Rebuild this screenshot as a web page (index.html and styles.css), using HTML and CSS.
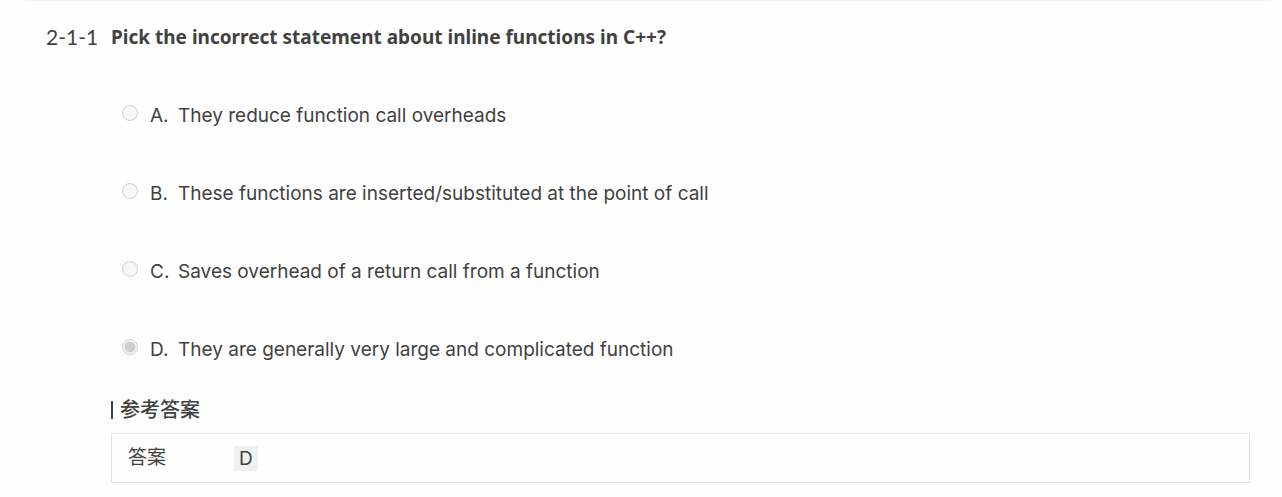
FILE: index.html
```html
<!DOCTYPE html>
<html lang="en">
<head>
<meta charset="utf-8">
<title>2-1-1</title>
<link rel="stylesheet" href="styles.css">
</head>
<body>
<main class="problem">
  <div class="number">2-1-1</div>
  <div class="content">
    <form>
      <fieldset class="question">
        <legend class="title">Pick the incorrect statement about inline functions in C++?</legend>
        <label class="option"><input class="radio" type="radio" name="answer" disabled><span class="letter">A.</span><span>They reduce function call overheads</span></label>
        <label class="option"><input class="radio" type="radio" name="answer" disabled><span class="letter">B.</span><span>These functions are inserted/substituted at the point of call</span></label>
        <label class="option"><input class="radio" type="radio" name="answer" disabled><span class="letter">C.</span><span>Saves overhead of a return call from a function</span></label>
        <label class="option"><input class="radio" type="radio" name="answer" disabled checked><span class="letter">D.</span><span>They are generally very large and complicated function</span></label>
      </fieldset>
    </form>
    <h2 class="heading" lang="zh-CN">参考答案</h2>
    <dl class="answer">
      <dt class="answer-label" lang="zh-CN">答案</dt>
      <dd class="answer-value">D</dd>
    </dl>
  </div>
</main>
</body>
</html>
```
FILE: styles.css
```css
* {
  box-sizing: border-box;
}

body {
  margin: 0;
  background: #fefefe;
  color: #414141;
  font: 19px/30px Inter, "Noto Sans CJK SC", sans-serif;
}

.problem {
  display: flex;
  gap: 10px;
  margin: 0 12px 0 25px;
  padding: 21px 20px 14px 21px;
  border-top: 1px solid #f7f7f7;
}

.number {
  flex: none;
  min-width: 55px;
  font-family: Lato, sans-serif;
  font-size: 21px;
}

.content {
  flex: 1;
  min-width: 0;
}

.question {
  margin: 0;
  padding: 0;
  border: 0;
}

.title {
  margin-bottom: 48px;
  padding: 0;
  font-family: "Noto Sans", sans-serif;
  font-weight: 700;
}

.option {
  display: flex;
  margin-bottom: 46px;
  padding-left: 11px;
  line-height: 32px;
}

.radio {
  appearance: none;
  flex: none;
  width: 16px;
  height: 16px;
  margin: 5px 12px 0 0;
  border: 1px solid #d0d0d0;
  border-radius: 50%;
  background: #f7f7f7;
}

.radio:checked {
  background: radial-gradient(circle, #cecece 0 5px, #f7f7f7 6px);
}

.letter {
  flex: none;
  width: 28px;
}

.option:last-child {
  margin-bottom: 29px;
}

.heading {
  display: flex;
  align-items: center;
  gap: 7px;
  margin: 0 0 8px;
  font-size: 20px;
  font-weight: 500;
}

.heading::before {
  content: "";
  width: 2px;
  height: 18px;
  background: #414141;
}

.answer {
  display: flex;
  align-items: center;
  margin: 0;
  padding: 9px 16px;
  border: 1px solid #e2e2e2;
}

.answer-label {
  width: 106px;
}

.answer-value {
  margin: 0;
  padding: 0 5px;
  background: #eff0f2;
  line-height: 25px;
}
```
